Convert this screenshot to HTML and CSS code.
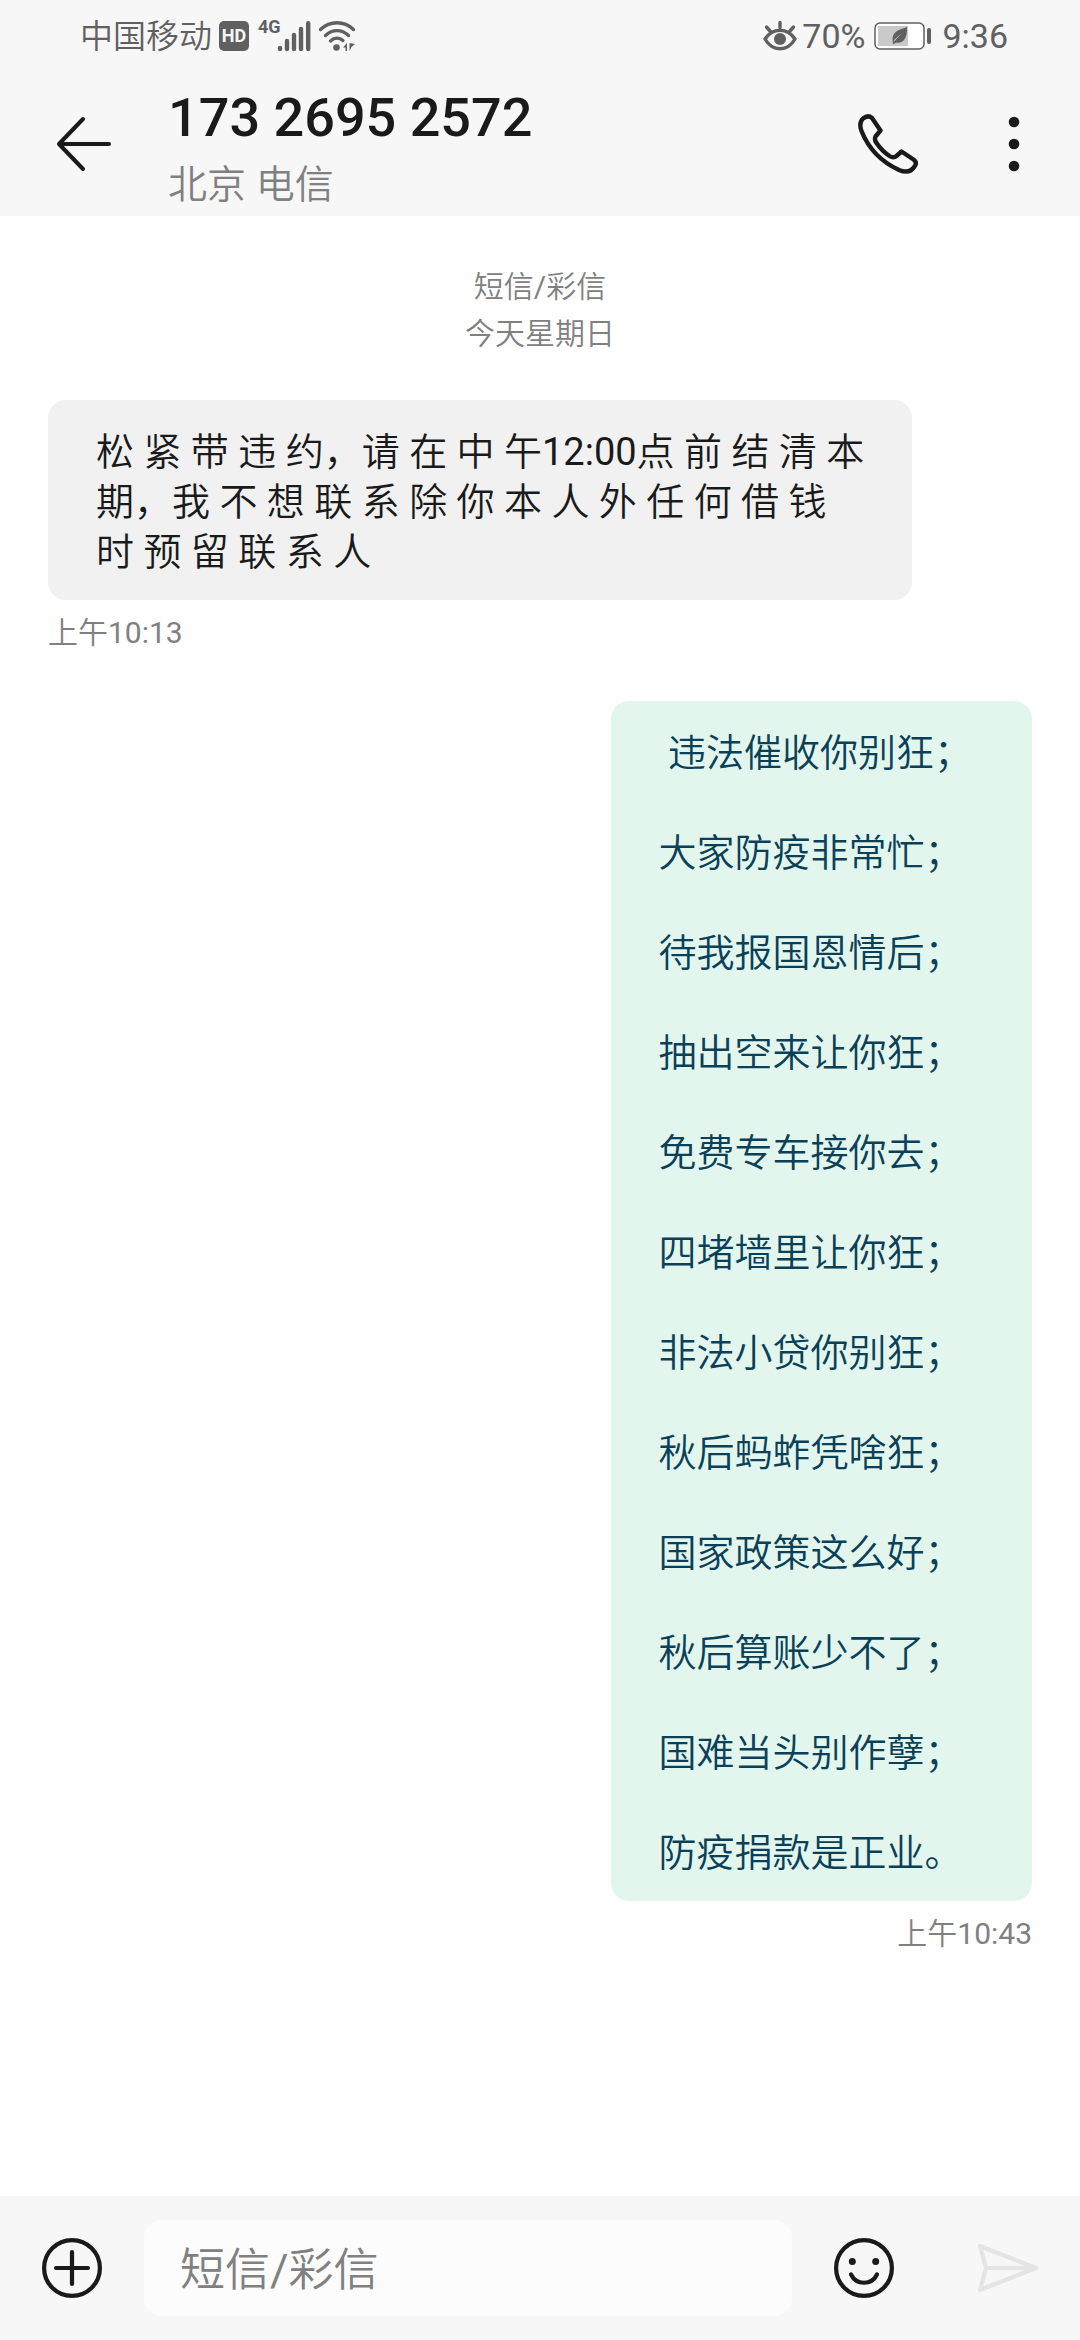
FILE: index.html
```html
<!DOCTYPE html>
<html lang="zh-CN">
<head>
<meta charset="utf-8">
<meta name="viewport" content="width=device-width, initial-scale=1">
<title>173 2695 2572</title>
<link rel="stylesheet" href="styles.css">
</head>
<body>
<div class="screen">
  <div class="status">
    <div class="status-group">
      <span class="carrier">中国移动</span>
      <span class="hd">HD</span>
      <span class="network">4G</span>
      <svg class="signal" width="34" height="32" viewBox="0 0 34 32" aria-hidden="true">
        <g fill="none" stroke="currentColor" stroke-width="4.4" stroke-linecap="round">
          <path d="M3 28v1M10 21v8M17 15v14M24 9v20M31.200 3.200v25.800"/>
        </g>
      </svg>
      <svg class="wifi" width="38" height="32" viewBox="0 0 38 32" aria-hidden="true">
        <g fill="none" stroke="currentColor" stroke-width="3.400" stroke-linecap="round">
          <path d="M2.500 9.500C12 .5 26 .5 35.500 9.500M7.500 15.500C14.500 9 23.500 9 30.500 15.500M12.500 21C16.500 17.500 21.500 17.500 25 20.500"/>
        </g>
        <circle cx="18.500" cy="27.500" r="3.300" fill="currentColor"/>
        <path fill="currentColor" d="M25 27.500l4-4.500v8h-1.500v-3.500zM31.500 23v8l2-4 3.500-3z"/>
      </svg>
    </div>
    <div class="status-group">
      <svg class="eye" width="34" height="32" viewBox="0 0 34 32" aria-hidden="true">
        <g fill="none" stroke="currentColor" stroke-width="3.400" stroke-linecap="round" stroke-linejoin="round">
          <path d="M2 19C9.500 7.500 24.500 7.500 32 19C24.500 32 9.500 32 2 19zM17 7.500v-5M7.500 11.500L3.500 7M26.500 11.500L30.500 7"/>
        </g>
        <circle cx="17" cy="19" r="6" fill="currentColor"/>
      </svg>
      <span class="percent">70%</span>
      <svg class="battery" width="58" height="28" viewBox="0 0 58 28" aria-hidden="true">
        <rect x="1" y="1" width="49" height="26" rx="5" fill="#fff" stroke="currentColor" stroke-width="1.500"/>
        <rect x="4" y="4" width="30" height="20" fill="#cacaca"/>
        <path fill="currentColor" d="M19 22L18.500 18C18.500 9 25 8 33 5C33.500 15 30 22 22 20.500L20 22zM19.500 20L28.500 10.500L20 18z"/>
        <rect x="53" y="6" width="4" height="16" rx="2" fill="currentColor"/>
      </svg>
      <span class="clock">9:36</span>
    </div>
  </div>

  <header class="header">
    <button class="icon-button back" type="button" aria-label="返回">
      <svg width="56" height="56" viewBox="0 0 56 56" aria-hidden="true">
        <path d="M27 3L3 28L27 53M3 28H53" fill="none" stroke="currentColor" stroke-width="4" stroke-linecap="round" stroke-linejoin="round"/>
      </svg>
    </button>
    <div class="contact">
      <h1 class="number">173 2695 2572</h1>
      <p class="place">北京 电信</p>
    </div>
    <button class="icon-button call" type="button" aria-label="拨打电话">
      <svg width="60" height="60" viewBox="0 0 60 60" aria-hidden="true">
        <path d="M5 4.500Q10 .5 14 4L22.500 16.500L17.500 22.500Q16 26 18.500 29Q24 37 31.500 42Q35.500 44.500 38.500 42L43.500 37.500L55.500 45.500Q59.500 48.500 56.500 52.500Q51.500 60.500 41 56Q14 43.500 3.500 17Q.500 9 5 4.500z" fill="none" stroke="currentColor" stroke-width="4.400" stroke-linejoin="round"/>
      </svg>
    </button>
    <button class="icon-button more" type="button" aria-label="更多">
      <svg width="12" height="56" viewBox="0 0 12 56" fill="currentColor" aria-hidden="true">
        <circle cx="6" cy="6" r="5.300"/><circle cx="6" cy="28" r="5.300"/><circle cx="6" cy="50" r="5.300"/>
      </svg>
    </button>
  </header>

  <main class="thread">
    <div class="day">
      <p>短信/彩信</p>
      <p>今天星期日</p>
    </div>
    <article class="message incoming">
      <p class="bubble">松 紧 带 违 约，请 在 中 午12:00点 前 结 清 本 期，我 不 想 联 系 除 你 本 人 外 任 何 借 钱 时 预 留 联 系 人</p>
      <time class="stamp">上午10:13</time>
    </article>
    <article class="message outgoing">
      <div class="bubble verse">
        <p>&nbsp;违法催收你别狂；</p>
        <p>大家防疫非常忙；</p>
        <p>待我报国恩情后；</p>
        <p>抽出空来让你狂；</p>
        <p>免费专车接你去；</p>
        <p>四堵墙里让你狂；</p>
        <p>非法小贷你别狂；</p>
        <p>秋后蚂蚱凭啥狂；</p>
        <p>国家政策这么好；</p>
        <p>秋后算账少不了；</p>
        <p>国难当头别作孽；</p>
        <p>防疫捐款是正业。</p>
      </div>
      <time class="stamp">上午10:43</time>
    </article>
  </main>

  <form class="composer">
    <button class="icon-button" type="button" aria-label="添加">
      <svg width="60" height="60" viewBox="0 0 60 60" aria-hidden="true">
        <g fill="none" stroke="currentColor" stroke-width="4.200" stroke-linecap="round">
          <circle cx="30" cy="30" r="27.900"/><path d="M30 14v32M14 30h32"/>
        </g>
      </svg>
    </button>
    <input class="field" type="text" placeholder="短信/彩信" aria-label="短信/彩信">
    <button class="icon-button" type="button" aria-label="表情">
      <svg width="60" height="60" viewBox="0 0 60 60" aria-hidden="true">
        <g fill="none" stroke="currentColor" stroke-width="4.200" stroke-linecap="round">
          <circle cx="30" cy="30" r="27.900"/><path d="M17 36.500C22.500 47.500 37.500 47.500 43 36.500"/>
        </g>
        <circle cx="18.300" cy="23.500" r="3.500" fill="currentColor"/><circle cx="41.700" cy="23.500" r="3.500" fill="currentColor"/>
      </svg>
    </button>
    <button class="icon-button send" type="submit" aria-label="发送" disabled>
      <svg width="60" height="60" viewBox="0 0 60 60" aria-hidden="true">
        <path d="M2 8L58 30L2 52L8 30zM8 30H57" fill="none" stroke="currentColor" stroke-width="4.200" stroke-linecap="round" stroke-linejoin="round"/>
      </svg>
    </button>
  </form>
</div>
</body>
</html>
```
FILE: styles.css
```css
* {
  box-sizing: border-box;
}

body,
h1,
p {
  margin: 0;
}

body {
  background: #fff;
  color: #1a1a1a;
  font-family: Roboto, "Noto Sans CJK SC DemiLight", "Noto Sans CJK SC Light", "Noto Sans CJK SC", sans-serif;
}

.screen {
  display: flex;
  flex-direction: column;
  min-height: 100vh;
}

/* Status bar */
.status {
  display: flex;
  justify-content: space-between;
  align-items: center;
  height: 72px;
  padding: 0 72px 0 80px;
  background: #f7f7f7;
  color: #606060;
  font-size: 34px;
  line-height: 40px;
}

.status-group {
  display: flex;
  align-items: center;
}

.carrier {
  padding-top: 2px;
  font-size: 33px;
}

.hd {
  width: 30px;
  height: 30px;
  margin-left: 7px;
  border-radius: 5px;
  background: #606060;
  color: #f7f7f7;
  font-size: 18px;
  font-weight: 700;
  line-height: 30px;
  text-align: center;
}

.network {
  align-self: flex-start;
  margin-left: 9px;
  font-size: 18px;
  font-weight: 700;
  line-height: 24px;
}

.signal {
  margin-left: -4px;
}

.wifi {
  margin-left: 7px;
}

.percent {
  margin-left: 5px;
}

.battery {
  margin: 0 10px 0 9px;
}

/* Conversation header */
.header {
  display: grid;
  grid-template-columns: 168px 1fr 144px 120px;
  align-items: center;
  height: 144px;
  background: #f7f7f7;
}

.icon-button {
  display: flex;
  justify-content: center;
  align-items: center;
  height: 96px;
  padding: 0;
  border: 0;
  background: none;
  color: #1a1a1a;
}

.more {
  padding-right: 12px;
}

.contact {
  padding-top: 10px;
}

.number {
  font-size: 54px;
  font-weight: 500;
  line-height: 72px;
}

.place {
  color: #808080;
  font-size: 39px;
  line-height: 62px;
}

/* Messages */
.thread {
  flex: 1;
  padding: 47px 48px 0;
}

.day {
  margin-bottom: 43px;
  color: #808080;
  font-size: 30px;
  line-height: 47px;
  text-align: center;
}

.message {
  display: flex;
  flex-direction: column;
  align-items: flex-start;
  gap: 13px;
  margin-bottom: 48px;
}

.outgoing {
  align-items: flex-end;
}

.bubble {
  max-width: 864px;
  padding: 27px 44px 23px 48px;
  border-radius: 18px;
  background: #f1f1f1;
  font-size: 38px;
  line-height: 50px;
}

.verse {
  display: flex;
  flex-direction: column;
  gap: 50px;
  padding-right: 60px;
  background: #e2f6ee;
  color: #0a4058;
}

.stamp {
  color: #808080;
  font-size: 30px;
  line-height: 40px;
}

/* Composer */
.composer {
  display: grid;
  grid-template-columns: 144px 1fr 144px 144px;
  align-items: center;
  height: 144px;
  background: #f7f7f7;
}

.field {
  width: 100%;
  height: 96px;
  padding: 4px 36px 0;
  border: 0;
  border-radius: 18px;
  background: #fcfcfc;
  color: #1a1a1a;
  font-family: inherit;
  font-size: 45px;
}

.field::placeholder {
  color: #808080;
}

.send {
  color: #e4e4e4;
}
```
